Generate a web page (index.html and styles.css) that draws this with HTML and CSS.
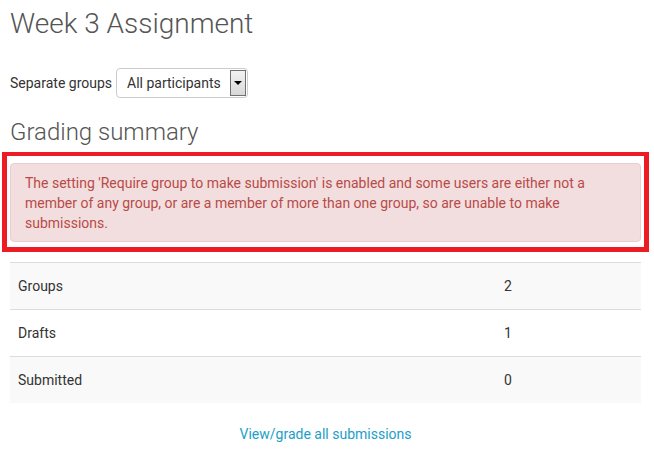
FILE: index.html
```html
<!DOCTYPE html>
<html>
<head>
<meta charset="utf-8">
<link rel="stylesheet" href="styles.css">
</head>
<body>
<div class="page">
  <h2 class="title">Week 3 Assignment</h2>
  <div class="groups">
    <label class="groups-label">Separate groups</label>
    <div class="select">
      <span class="select-text">All participants</span>
      <span class="select-btn"><span class="tri"></span></span>
    </div>
  </div>
  <h3 class="subtitle">Grading summary</h3>
  <div class="highlight">
    <div class="alert">The setting 'Require group to make submission' is enabled and some users are either not a member of any group, or are a member of more than one group, so are unable to make submissions.</div>
  </div>
  <table class="summary">
    <tr class="odd"><td class="c0">Groups</td><td>2</td></tr>
    <tr><td class="c0">Drafts</td><td>1</td></tr>
    <tr class="odd"><td class="c0">Submitted</td><td>0</td></tr>
  </table>
  <div class="links"><a href="#" class="link">View/grade all submissions</a></div>
</div>
</body>
</html>
```

FILE: styles.css
```css
html, body {
  margin: 0;
  padding: 0;
  background: #fff;
}
body {
  font-family: Roboto, "Liberation Sans", sans-serif;
  font-size: 14px;
  line-height: 20px;
  color: #333;
}
.page {
  width: 631px;
  padding: 0 10px;
}
.title {
  margin: 6px 0 0;
  font-size: 28px;
  line-height: 36px;
  font-weight: 300;
  color: #555;
}
.groups {
  display: flex;
  align-items: center;
  gap: 4px;
  margin-top: 26px;
}
.groups-label {
  font-size: 14px;
  color: #333;
}
.select {
  box-sizing: border-box;
  width: 132px;
  height: 30px;
  border: 1px solid #ccc;
  border-radius: 4px;
  display: flex;
  align-items: center;
  justify-content: space-between;
  padding: 0 1px 0 10px;
  background: #fff;
}
.select-text {
  color: #333;
}
.select-btn {
  box-sizing: border-box;
  width: 16px;
  height: 26px;
  border: 1px solid #707070;
  background: linear-gradient(#f2f2f2, #d8d8d8);
  display: flex;
  align-items: center;
  justify-content: center;
}
.tri {
  width: 0;
  height: 0;
  border-left: 4px solid transparent;
  border-right: 4px solid transparent;
  border-top: 4px solid #000;
}
.subtitle {
  margin: 19px 0 0;
  font-size: 24px;
  line-height: 30px;
  font-weight: 300;
  color: #555;
}
.highlight {
  margin: 5px -8px 0;
  border: 5px solid #ed1c24;
  border-top-width: 4px;
  padding: 7px 3px 5px;
}
.alert {
  background: #f2dede;
  border: 1px solid #ebccd1;
  border-radius: 4px;
  color: #b94a48;
  padding: 9px 35px 8px 14px;
}
.summary {
  width: 100%;
  border-collapse: collapse;
  margin-top: 10px;
}
.summary td {
  border-top: 1px solid #ddd;
  padding: 13px 8px;
  line-height: 20px;
  text-align: left;
}
.summary .c0 {
  width: 470px;
}
.summary tr.odd td {
  background: #f9f9f9;
}
.links {
  text-align: center;
  margin-top: 21px;
}
.link {
  color: #1ba0c7;
  text-decoration: none;
}
```
